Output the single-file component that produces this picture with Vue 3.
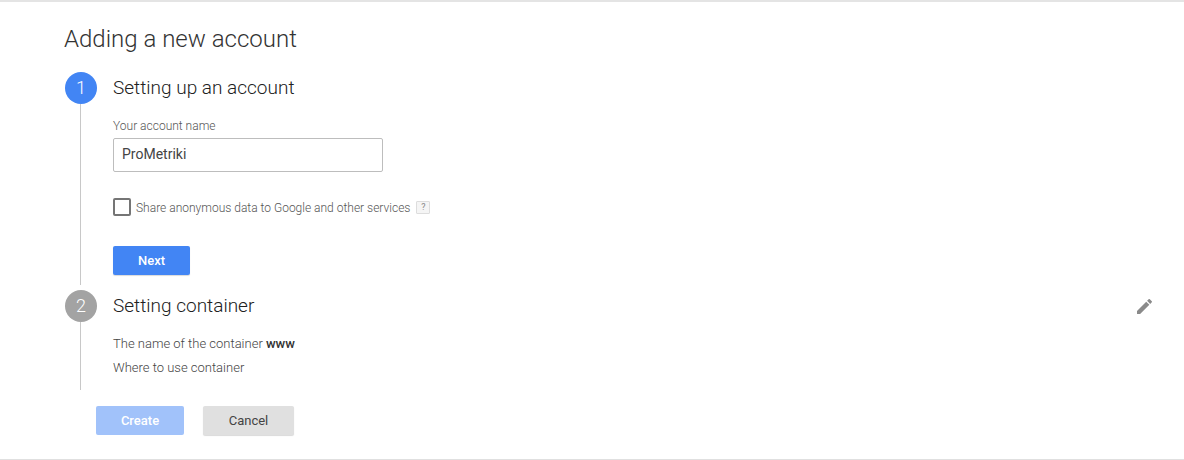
<script setup>
const accountName = 'ProMetriki'
</script>

<template>
  <div class="page">
    <h1 class="title">Adding a new account</h1>

    <section class="step step-one">
      <div class="rail">
        <div class="circle active">1</div>
        <div class="line"></div>
      </div>
      <div class="step-body">
        <h2 class="step-title">Setting up an account</h2>
        <label class="field-label">Your account name</label>
        <input class="field" type="text" :value="accountName" />
        <div class="share">
          <span class="checkbox"></span>
          <span class="share-text">Share anonymous data to Google and other services</span>
          <span class="help">?</span>
        </div>
        <button class="btn primary next">Next</button>
      </div>
    </section>

    <section class="step step-two">
      <div class="rail">
        <div class="circle">2</div>
        <div class="line"></div>
      </div>
      <div class="step-body">
        <div class="step-head">
          <h2 class="step-title">Setting container</h2>
          <svg class="edit" viewBox="3 3 18 18" width="15" height="15">
            <path fill="#8a8a8a" d="M3 17.25V21h3.75L17.81 9.94l-3.75-3.75L3 17.25zM20.71 7.04a1 1 0 0 0 0-1.41l-2.34-2.34a1 1 0 0 0-1.41 0l-1.83 1.83 3.75 3.75 1.83-1.83z" />
          </svg>
        </div>
        <p class="summary first">The name of the container <b>www</b></p>
        <p class="summary">Where to use container</p>
      </div>
    </section>

    <div class="actions">
      <button class="btn primary disabled create">Create</button>
      <button class="btn cancel">Cancel</button>
    </div>
  </div>
</template>

<style scoped>
.page {
  box-sizing: border-box;
  height: 460px;
  padding: 0 0 0 65px;
  background: #fff;
  border-top: 2px solid #e4e4e4;
  border-bottom: 1px solid #e0e0e0;
  font-family: Roboto, "Liberation Sans", sans-serif;
  color: #444;
  overflow: hidden;
}

.title {
  margin: 0 0 0 -1px;
  padding-top: 22px;
  font-size: 24px;
  font-weight: 300;
  line-height: 30px;
  color: #333;
}

.step {
  display: flex;
  gap: 16px;
}

.step-one {
  margin-top: 18px;
  height: 218px;
}

.step-two {
  height: 100px;
}

.rail {
  display: flex;
  flex-direction: column;
  align-items: center;
  width: 32px;
  flex: none;
}

.circle {
  width: 32px;
  height: 32px;
  flex: none;
  border-radius: 50%;
  background: #a3a3a3;
  color: #fff;
  font-size: 18px;
  font-weight: 300;
  line-height: 32px;
  text-align: center;
}

.circle.active {
  background: #4285f4;
}

.line {
  flex: 1;
  width: 1px;
  margin-right: 1px;
  background: #c8c8c8;
}

.step-one .line {
  margin-bottom: 5px;
}

.step-body {
  flex: 1;
  min-width: 0;
}

.step-head {
  display: flex;
  justify-content: space-between;
  align-items: center;
  padding-right: 32px;
}

.step-title {
  margin: 0;
  font-size: 19px;
  font-weight: 300;
  line-height: 32px;
  color: #212121;
}

.field-label {
  display: block;
  margin-top: 14px;
  font-size: 12px;
  font-weight: 300;
  line-height: 16px;
  color: #555;
}

.field {
  display: block;
  box-sizing: border-box;
  width: 270px;
  height: 34px;
  margin-top: 4px;
  padding: 0 8px 2px;
  border: 1px solid #bdbdbd;
  border-radius: 2px;
  outline: none;
  font-family: inherit;
  font-size: 14px;
  font-weight: 400;
  color: #444;
}

.share {
  display: flex;
  align-items: center;
  margin-top: 26px;
  height: 18px;
}

.checkbox {
  box-sizing: border-box;
  width: 18px;
  height: 18px;
  flex: none;
  border: 2px solid #757575;
  border-radius: 2px;
}

.share-text {
  margin-left: 5px;
  padding-top: 2px;
  font-size: 12px;
  font-weight: 300;
  color: #555;
}

.help {
  box-sizing: border-box;
  width: 14px;
  height: 13px;
  margin-left: 6px;
  border: 1px solid #ddd;
  border-radius: 1px;
  background: #f5f5f5;
  font-size: 9px;
  line-height: 11px;
  text-align: center;
  color: #888;
}

.btn {
  display: block;
  box-sizing: border-box;
  height: 29px;
  padding: 0;
  border: none;
  border-radius: 2px;
  font-family: inherit;
  font-size: 13px;
  font-weight: 500;
  box-shadow: 0 1px 1px rgba(0, 0, 0, 0.15);
}

.primary {
  background: #4285f4;
  color: #fff;
}

.next {
  width: 77px;
  margin-top: 30px;
}

.summary {
  margin: 0;
  font-size: 13px;
  font-weight: 300;
  line-height: 16px;
  color: #444;
}

.summary b {
  font-weight: 500;
  color: #333;
}

.summary.first {
  margin-top: 14px;
  margin-bottom: 8px;
}

.actions {
  display: flex;
  gap: 19px;
  margin: 16px 0 0 31px;
}

.create {
  width: 88px;
}

.disabled {
  background: #a1c2fa;
  box-shadow: none;
}

.cancel {
  width: 91px;
  background: #e0e0e0;
  color: #444;
  font-weight: 400;
}
</style>
